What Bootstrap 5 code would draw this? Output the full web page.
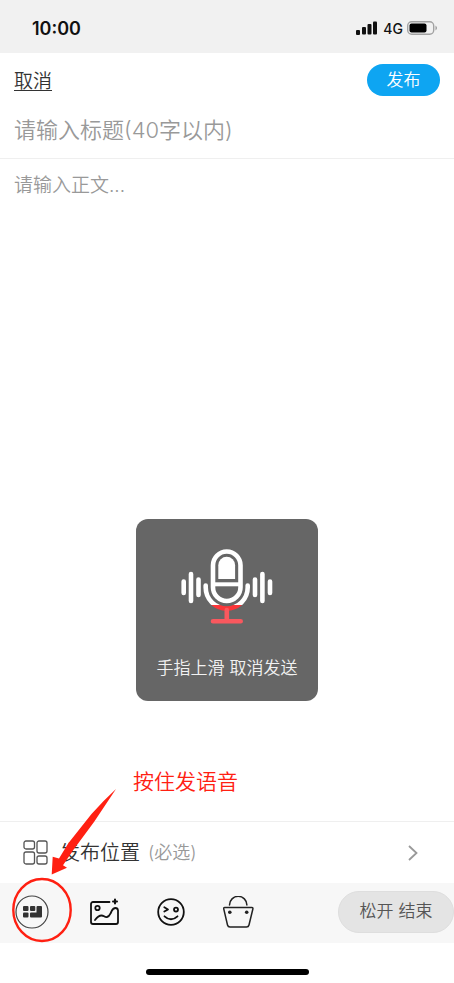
<!DOCTYPE html>
<html lang="zh-CN">
<head>
<meta charset="utf-8">
<meta name="viewport" content="width=device-width, initial-scale=1">
<title>发布</title>
<link href="https://cdn.jsdelivr.net/npm/bootstrap@5.3.0/dist/css/bootstrap.min.css" rel="stylesheet">
<style>
  body { font-family: Inter, "Noto Sans CJK SC", sans-serif; font-weight: 350; color: #333; background: #fff; }
  svg { display: block; flex-shrink: 0; }
  .status-bar { height: 53px; background: #f1f1f1; padding: 3px 16px 0 32px; color: #111; }
  .status-time { font-size: 18px; font-weight: 600; }
  .status-net { font-size: 14px; font-weight: 500; }
  .head { height: 54px; padding: 0 14px; }
  .cancel-link { font-size: 19px; padding-top: 4px; color: #333; text-underline-offset: 2px; text-decoration-thickness: 1px; }
  .publish-btn { height: 32px; width: 73px; padding: 0; font-size: 17px; line-height: 32px; color: #fff; background: #0ea5f2; font-weight: 350; }
  .field { padding-left: 14px; padding-right: 14px; resize: none; background: transparent; font-weight: 350; }
  .field:focus { box-shadow: none; }
  .field::placeholder { color: #999; opacity: 1; }
  .title-field { height: 52px; font-size: 22px; padding-top: 0; padding-bottom: 5px; border-bottom: 1px solid #efefef !important; }
  .body-field { font-size: 19px; line-height: 26px; padding-top: 14px; }
  .voice-toast { width: 182px; height: 182px; bottom: 120px; border-radius: 12px; background: #666; color: #f2f2f2; font-size: 17px; padding-top: 28px; gap: 29px; }
  .location-row { height: 62px; padding: 0 35px 0 23px; border-top: 1px solid #efefef; color: #333; font-size: 20px; }
  .location-hint { font-size: 18px; color: #999; }
  .tool-row { height: 60px; background: #f7f7f7; padding: 0 0 2px 15px; }
  .tool-list { gap: 37px; }
  .hold-btn { height: 42px; width: 116px; font-size: 17px; color: #555; background: #e4e4e4; border: 1px solid #dedede; font-weight: 350; }
  .home-area { height: 40px; padding-top: 26px; }
  .home-bar { width: 163px; height: 6px; background: #000; }
  .note-layer { left: 0; bottom: 0; pointer-events: none; }
  .note-text { left: 133px; bottom: 186px; font-size: 21px; line-height: 30px; color: #ff2012; }
</style>
</head>
<body>
<div class="d-flex flex-column min-vh-100 overflow-hidden position-relative">
  <div class="status-bar d-flex align-items-center justify-content-between">
    <span class="status-time">10:00</span>
    <div class="d-flex align-items-center gap-1">
      <svg width="23" height="14" viewBox="0 0 23 14" fill="#111" aria-hidden="true"><rect x="0" y="9" width="4" height="5" rx="1"/><rect x="6" y="6" width="4" height="7.500" rx="1"/><rect x="11.500" y="3" width="4" height="10.500" rx="1"/><rect x="17" y="0.500" width="4" height="13" rx="1"/></svg>
      <span class="status-net">4G</span>
      <svg width="31" height="14" viewBox="0 0 31 14" aria-hidden="true"><rect x=".7" y=".7" width="26" height="12.600" rx="4" fill="none" stroke="#a2a2a2" stroke-width="1.400"/><rect x="2.500" y="2.500" width="17" height="9" rx="2" fill="#000"/><path d="M28.500 4.500q3 2.500 0 5z" fill="#999"/></svg>
    </div>
  </div>

  <header class="head d-flex align-items-center justify-content-between">
    <a href="#" class="cancel-link">取消</a>
    <button type="button" class="publish-btn btn rounded-pill border-0">发布</button>
  </header>

  <input type="text" class="field title-field form-control border-0 rounded-0" maxlength="40" placeholder="请输入标题(40字以内)" aria-label="标题">

  <main class="d-flex flex-column flex-grow-1 position-relative">
    <textarea class="field body-field form-control border-0 rounded-0 flex-grow-1" placeholder="请输入正文..." aria-label="正文"></textarea>
    <div class="voice-toast position-absolute start-50 translate-middle-x d-flex flex-column align-items-center" role="status">
      <svg width="94" height="80" viewBox="0 0 94 80" fill="none" stroke-linecap="round" aria-hidden="true">
        <defs>
          <clipPath id="holderTop"><path d="M0 0h94v58H0z"/></clipPath>
          <clipPath id="holderBottom"><path d="M0 58h94v22H0z"/></clipPath>
        </defs>
        <path d="M3.700 34.500V46M11 27v27M18.500 32.500V48M75 32.500V48M82.400 27v27M90 34.500V46" stroke="#fff" stroke-width="4.600"/>
        <rect x="33" y="4.500" width="27.500" height="49.500" rx="13.750" stroke="#fff" stroke-width="4.600"/>
        <path d="M33 37.300h27.500" stroke="#fff" stroke-width="4" stroke-linecap="butt"/>
        <path d="M38.300 32V18.200a8.400 8.400 0 0 1 16.800 0V32z" fill="#fff"/>
        <path d="M25.700 38.500v2a21 21 0 0 0 42 0v-2" stroke="#fff" stroke-width="4.600" clip-path="url(#holderTop)"/>
        <path d="M25.700 38.500v2a21 21 0 0 0 42 0v-2" stroke="#fb3538" stroke-width="4.600" clip-path="url(#holderBottom)"/>
        <path d="M46.800 63v10M33 74.300h27.700" stroke="#f9585e" stroke-width="4.600"/>
      </svg>
      <span class="text-nowrap">手指上滑 取消发送</span>
    </div>
  </main>

  <a href="#" class="location-row d-flex align-items-center text-decoration-none">
    <svg width="25" height="25" viewBox="0 0 25 25" fill="none" stroke="#555" stroke-width="1.300" aria-hidden="true"><rect x="1" y="1" width="10.500" height="8" rx="2"/><rect x="14" y="1" width="10" height="12" rx="2"/><rect x="1" y="12" width="10.500" height="12" rx="2"/><rect x="14" y="16" width="10" height="8" rx="2"/></svg>
    <span class="ms-2 ps-1">发布位置</span>
    <span class="location-hint ms-2">(必选)</span>
    <svg class="ms-auto" width="12" height="18" viewBox="0 0 12 18" fill="none" stroke="#999" stroke-width="1.800" aria-hidden="true"><path d="M2 2l7.500 7L2 16"/></svg>
  </a>

  <div class="tool-row d-flex align-items-center justify-content-between">
    <div class="tool-list d-flex align-items-center">
      <button type="button" class="btn p-0 border-0" aria-label="语音">
        <svg width="34" height="34" viewBox="0 0 34 34" fill="#333"><circle cx="17" cy="17" r="16" fill="none" stroke="#444" stroke-width="1.200"/><rect x="8" y="11" width="5.500" height="5" rx="1"/><rect x="15" y="11" width="5.300" height="5" rx="1"/><rect x="8" y="17.500" width="5.500" height="5" rx="1"/><path d="M16 17.500h5.500V12q0-1 1-1H26q1 0 1 1v9.500q0 1-1 1H16q-1 0-1-1v-3q0-1 1-1z"/></svg>
      </button>
      <button type="button" class="btn p-0 border-0" aria-label="图片">
        <svg width="33" height="30" viewBox="0 0 33 30" fill="none" stroke="#111" stroke-width="1.800" stroke-linecap="round" stroke-linejoin="round"><path d="M23.500 5H7a2 2 0 0 0-2 2v18a2 2 0 0 0 2 2h23a2 2 0 0 0 2-2V13.500q-.3-2.500-2.500-2.500c-3 0-3.500 2.500-4.500 4.500s-1.500 4-4 4.500-3-1.500-5.500-1.500c-3 0-5 2.500-6.500 4.500"/><circle cx="11.500" cy="11" r="2.200"/><path d="M29 2.500v4M27 4.500h4" stroke-width="2"/></svg>
      </button>
      <button type="button" class="btn p-0 border-0" aria-label="表情">
        <svg width="30" height="30" viewBox="0 0 30 30" fill="none" stroke="#111" stroke-width="1.800" stroke-linecap="round" stroke-linejoin="round"><circle cx="15" cy="15" r="12.800"/><path d="M8.300 10.200l3.700 2.200-3.700 2.200M8.500 19.300q6.500 6 13 0"/><circle cx="20" cy="12.600" r="2"/></svg>
      </button>
      <button type="button" class="btn p-0 border-0" aria-label="商品">
        <svg width="32" height="32" viewBox="0 0 32 32" fill="none" stroke="#222" stroke-width="1.500" stroke-linecap="round" stroke-linejoin="round"><path d="M6.500 9a8.700 8.700 0 0 1 17.400 0M1.800 11.500h27q1.500 0 1 1.700L26 29q-.5 2-2.500 2H7q-2 0-2.500-2L.8 13.200q-.5-1.700 1-1.700z"/><g fill="#222" stroke="none"><circle cx="6.800" cy="16.300" r="1.800"/><circle cx="23.700" cy="16.300" r="1.800"/></g></svg>
      </button>
    </div>
    <button type="button" class="hold-btn btn rounded-pill p-0">松开 结束</button>
  </div>

  <footer class="home-area d-flex justify-content-center">
    <div class="home-bar rounded-pill"></div>
  </footer>

  <svg class="note-layer position-absolute" width="130" height="200" viewBox="0 783 130 200" fill="none" aria-hidden="true">
    <path d="M116 789Q104 800 91.500 814L68.300 843.300 59 858.500 52.700 856.700 51.700 874.500 67 867.700 63 865.300 73.300 850 94 822z" fill="#ff2012"/>
    <ellipse cx="42" cy="910" rx="28.700" ry="31" stroke="#ff2012" stroke-width="2.400"/>
  </svg>
  <div class="note-text position-absolute text-nowrap">按住发语音</div>
</div>
<script src="https://cdn.jsdelivr.net/npm/bootstrap@5.3.0/dist/js/bootstrap.bundle.min.js"></script>
</body>
</html>
